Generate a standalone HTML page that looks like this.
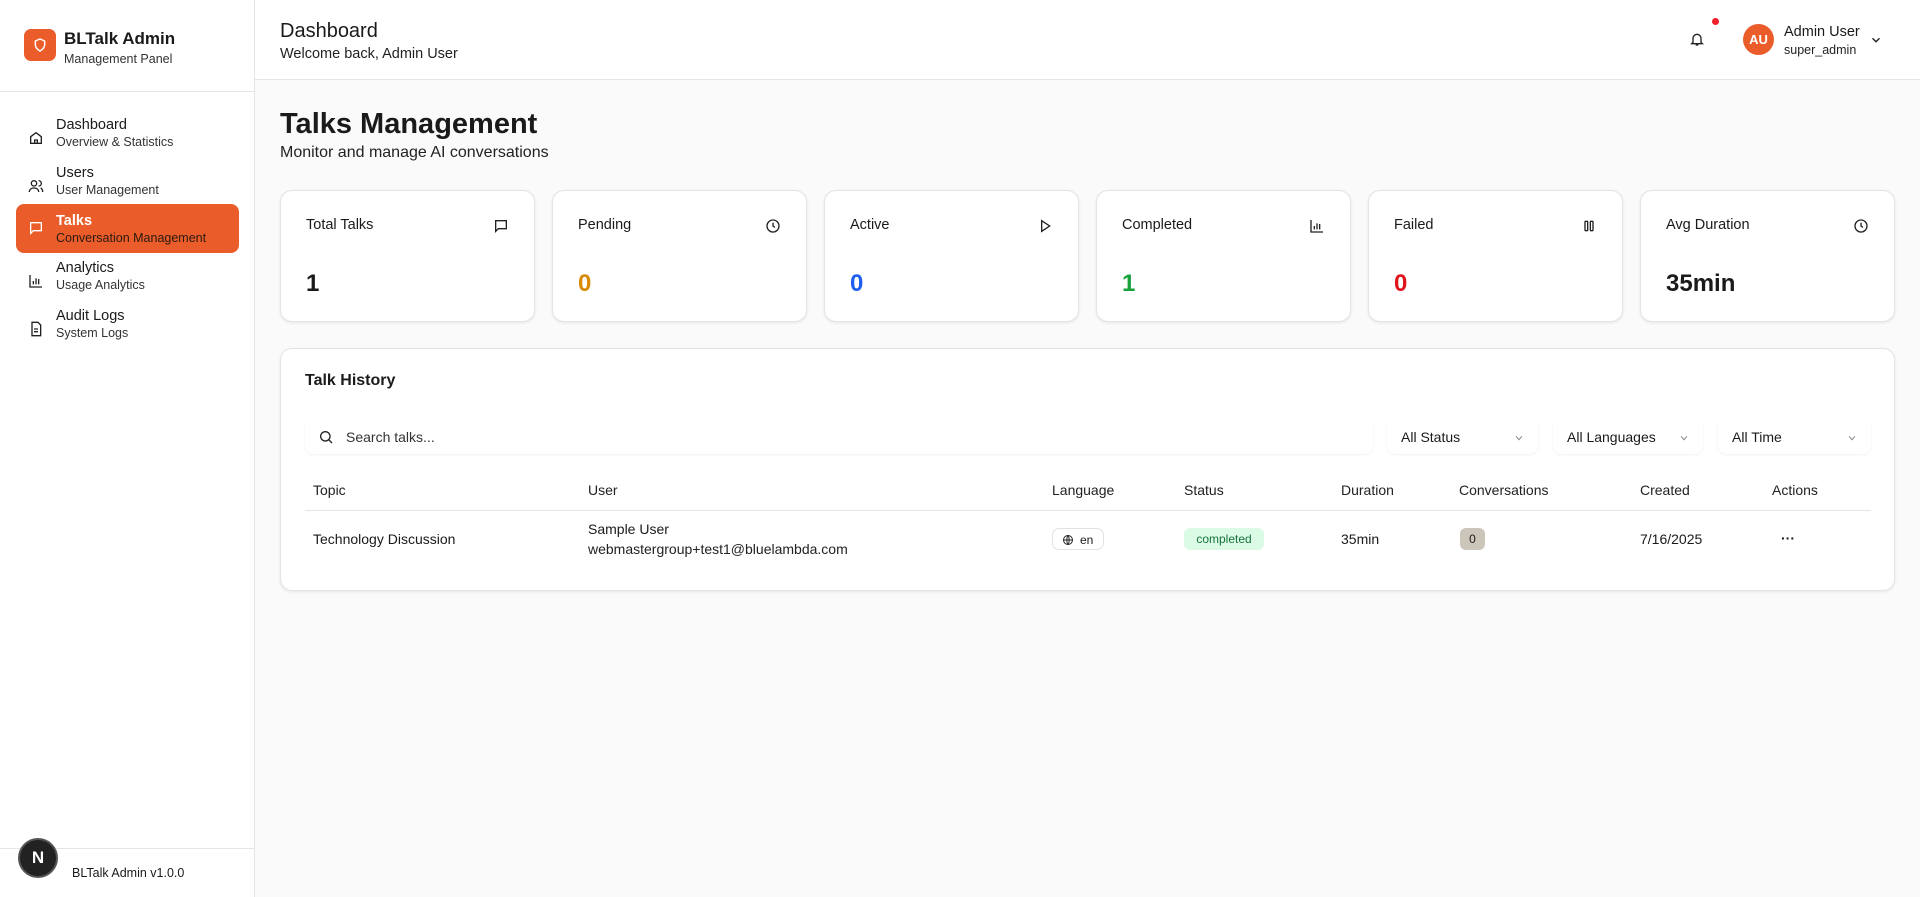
<!DOCTYPE html>
<html><head><meta charset="utf-8"><style>
*{box-sizing:border-box;margin:0;padding:0}
body{width:1920px;height:897px;font-family:"Liberation Sans",sans-serif;color:#1a1a1a;background:#fafafa;position:relative;overflow:hidden}
.side{position:absolute;left:0;top:0;width:255px;height:897px;background:#fff;border-right:1px solid #e5e5e5}
.abs{position:absolute}
.logo{left:24px;top:29px;width:32px;height:32px;border-radius:7px;background:#ea5d2b;display:flex;align-items:center;justify-content:center}
.nav{position:absolute;left:16px;width:223px;height:48px;border-radius:8px}
.nav svg{position:absolute;left:12px;top:16px}
.nav .t{position:absolute;left:40px;top:3px;font-size:14.5px;color:#1a1a1a}
.nav .s{position:absolute;left:40px;top:21px;font-size:12.5px;color:#333}
.nav.on{background:#ea5d2b}
.nav.on .t{color:#fff;font-weight:bold;top:9px}
.nav.on .s{color:#2a1a10;top:27px}
.card{position:absolute;background:#fff;border:1px solid #e4e4e4;border-radius:12px;box-shadow:0 1px 3px rgba(0,0,0,.08)}
.stat{top:190px;width:255px;height:132px}
.stat .l{position:absolute;left:25px;top:26px;font-size:14.5px}
.stat .v{position:absolute;left:25px;top:79px;font-size:24px;font-weight:bold}
.stat svg{position:absolute;right:25px;top:27px}
.sel{position:absolute;top:419px;height:35px;background:#fff;border-radius:8px;box-shadow:0 1px 2px rgba(0,0,0,.06);font-size:14px;padding:10px 0 0 14px}
.sel svg{position:absolute;right:14px;top:14px}
.th{position:absolute;top:482px;font-size:14px;color:#222}
.td{position:absolute;font-size:14px}
</style></head><body>
<div class="side">
 <div class="abs logo"><svg width="16" height="16" viewBox="0 0 24 24" fill="none" stroke="#fff" stroke-width="2.2" stroke-linejoin="round"><path d="M12 3l7 3v5c0 5-3.5 8-7 10-3.5-2-7-5-7-10V6z"/></svg></div>
 <div class="abs" style="left:64px;top:29px;font-size:17px;font-weight:bold">BLTalk Admin</div>
 <div class="abs" style="left:64px;top:52px;font-size:12.5px;color:#333">Management Panel</div>
 <div class="abs" style="left:0;top:91px;width:255px;border-top:1px solid #e5e5e5"></div>
 <div class="nav" style="top:114px"><svg width="16" height="16" viewBox="0 0 24 24" fill="none" stroke="#222" stroke-width="2"><path d="M4 10l8-6 8 6v10H4z"/><path d="M10 20v-5h4v5"/></svg><div class="t">Dashboard</div><div class="s">Overview &amp; Statistics</div></div>
 <div class="nav" style="top:162px"><svg width="16" height="16" viewBox="0 0 24 24" fill="none" stroke="#222" stroke-width="2"><circle cx="9" cy="8" r="4"/><path d="M2 21c0-4 3-6 7-6s7 2 7 6M16 4a4 4 0 010 8M19 15c2 1 3 3 3 6"/></svg><div class="t">Users</div><div class="s">User Management</div></div>
 <div class="nav on" style="top:204px;height:49px"><svg width="16" height="16" viewBox="0 0 24 24" fill="none" stroke="#fff" stroke-width="2"><path d="M4 4h16v12H8l-4 4z"/></svg><div class="t">Talks</div><div class="s">Conversation Management</div></div>
 <div class="nav" style="top:257px"><svg width="16" height="16" viewBox="0 0 24 24" fill="none" stroke="#222" stroke-width="2"><path d="M3 3v18h18M8 17v-5M12 17V8M16 17v-8"/></svg><div class="t">Analytics</div><div class="s">Usage Analytics</div></div>
 <div class="nav" style="top:305px"><svg width="16" height="16" viewBox="0 0 24 24" fill="none" stroke="#222" stroke-width="2"><path d="M6 2h9l4 4v16H6z"/><path d="M9 12h6M9 16h6"/></svg><div class="t">Audit Logs</div><div class="s">System Logs</div></div>
 <div class="abs" style="left:0;top:848px;width:255px;border-top:1px solid #e5e5e5"></div>
 <div class="abs" style="left:18px;top:838px;width:40px;height:40px;border-radius:50%;background:#222;border:2px solid #555;color:#fff;font-size:17px;font-weight:bold;text-align:center;line-height:36px">N</div>
 <div class="abs" style="left:72px;top:866px;font-size:12.5px">BLTalk Admin v1.0.0</div>
</div>
<div class="abs" style="left:255px;top:0;width:1665px;height:80px;background:#fff;border-bottom:1px solid #e5e5e5"></div>
<div class="abs" style="left:280px;top:20px;font-size:20px">Dashboard</div>
<div class="abs" style="left:280px;top:46px;font-size:14.5px;color:#222">Welcome back, Admin User</div>
<svg class="abs" style="left:1689px;top:31px" width="16" height="16" viewBox="0 0 24 24" fill="none" stroke="#222" stroke-width="2"><path d="M6 17V11a6 6 0 0112 0v6l2 2H4zM10 21h4"/></svg>
<div class="abs" style="left:1712px;top:18px;width:7px;height:7px;border-radius:50%;background:#f0202c"></div>
<div class="abs" style="left:1743px;top:24px;width:31px;height:31px;border-radius:50%;background:#ea5d2b;color:#fff;font-weight:bold;font-size:13px;text-align:center;line-height:31px">AU</div>
<div class="abs" style="left:1784px;top:24px;font-size:14.5px">Admin User</div>
<div class="abs" style="left:1784px;top:43px;font-size:12.5px;color:#222">super_admin</div>
<svg class="abs" style="left:1869px;top:33px" width="14" height="14" viewBox="0 0 24 24" fill="none" stroke="#222" stroke-width="2.4"><path d="M6 9l6 6 6-6"/></svg>

<div class="abs" style="left:280px;top:108px;font-size:29px;font-weight:bold">Talks Management</div>
<div class="abs" style="left:280px;top:144px;font-size:16px;color:#222">Monitor and manage AI conversations</div>

<div class="card stat" style="left:280px"><div class="l">Total Talks</div><svg width="16" height="16" viewBox="0 0 24 24" fill="none" stroke="#222" stroke-width="2"><path d="M4 4h16v12H8l-4 4z"/></svg><div class="v">1</div></div>
<div class="card stat" style="left:552px"><div class="l">Pending</div><svg width="16" height="16" viewBox="0 0 24 24" fill="none" stroke="#222" stroke-width="2"><circle cx="12" cy="12" r="9"/><path d="M12 7v5l3 2"/></svg><div class="v" style="color:#d98a06">0</div></div>
<div class="card stat" style="left:824px"><div class="l">Active</div><svg width="16" height="16" viewBox="0 0 24 24" fill="none" stroke="#222" stroke-width="2"><path d="M7 4l12 8-12 8z"/></svg><div class="v" style="color:#1f5ff0">0</div></div>
<div class="card stat" style="left:1096px"><div class="l">Completed</div><svg width="16" height="16" viewBox="0 0 24 24" fill="none" stroke="#222" stroke-width="2"><path d="M3 3v18h18M8 17v-5M12 17V8M16 17v-8"/></svg><div class="v" style="color:#18a13c">1</div></div>
<div class="card stat" style="left:1368px"><div class="l">Failed</div><svg width="16" height="16" viewBox="0 0 24 24" fill="none" stroke="#222" stroke-width="2"><rect x="6" y="5" width="4" height="14" rx="1"/><rect x="14" y="5" width="4" height="14" rx="1"/></svg><div class="v" style="color:#e0141c">0</div></div>
<div class="card stat" style="left:1640px"><div class="l">Avg Duration</div><svg width="16" height="16" viewBox="0 0 24 24" fill="none" stroke="#222" stroke-width="2"><circle cx="12" cy="12" r="9"/><path d="M12 7v5l3 2"/></svg><div class="v">35min</div></div>

<div class="card" style="left:280px;top:348px;width:1615px;height:243px"></div>
<div class="abs" style="left:305px;top:372px;font-size:16px;font-weight:bold">Talk History</div>
<div class="sel" style="left:305px;width:1068px;color:#333;padding-left:41px"><svg style="position:absolute;left:13px;top:10px" width="16" height="16" viewBox="0 0 24 24" fill="none" stroke="#222" stroke-width="2"><circle cx="11" cy="11" r="7"/><path d="M16 16l5 5"/></svg>Search talks...</div>
<div class="sel" style="left:1387px;width:151px">All Status<svg width="10" height="10" viewBox="0 0 24 24" fill="none" stroke="#888" stroke-width="2.5"><path d="M5 8l7 8 7-8"/></svg></div>
<div class="sel" style="left:1553px;width:150px">All Languages<svg width="10" height="10" viewBox="0 0 24 24" fill="none" stroke="#888" stroke-width="2.5"><path d="M5 8l7 8 7-8"/></svg></div>
<div class="sel" style="left:1718px;width:153px">All Time<svg width="10" height="10" viewBox="0 0 24 24" fill="none" stroke="#888" stroke-width="2.5"><path d="M5 8l7 8 7-8"/></svg></div>

<div class="th" style="left:313px">Topic</div>
<div class="th" style="left:588px">User</div>
<div class="th" style="left:1052px">Language</div>
<div class="th" style="left:1184px">Status</div>
<div class="th" style="left:1341px">Duration</div>
<div class="th" style="left:1459px">Conversations</div>
<div class="th" style="left:1640px">Created</div>
<div class="th" style="left:1772px">Actions</div>
<div class="abs" style="left:305px;top:510px;width:1566px;border-top:1px solid #e5e5e5"></div>
<div class="td" style="left:313px;top:531px">Technology Discussion</div>
<div class="td" style="left:588px;top:521px">Sample User</div>
<div class="td" style="left:588px;top:541px;color:#222">webmastergroup+test1@bluelambda.com</div>
<div class="td" style="left:1052px;top:528px;height:22px;width:52px;border:1px solid #e2e2e2;border-radius:7px;font-size:12px;padding:4px 0 0 27px">en<svg style="position:absolute;left:9px;top:5px" width="12" height="12" viewBox="0 0 24 24" fill="none" stroke="#222" stroke-width="2"><circle cx="12" cy="12" r="9"/><path d="M3 12h18M12 3c3 3 3 15 0 18M12 3c-3 3-3 15 0 18"/></svg></div>
<div class="td" style="left:1184px;top:528px;height:22px;width:80px;background:#dcfbe6;border-radius:6px;color:#16733a;font-size:12px;text-align:center;line-height:22px">completed</div>
<div class="td" style="left:1341px;top:531px">35min</div>
<div class="td" style="left:1460px;top:528px;width:25px;height:22px;background:#cbc5ba;border-radius:6px;font-size:12px;text-align:center;line-height:22px">0</div>
<div class="td" style="left:1640px;top:531px">7/16/2025</div>
<div class="td" style="left:1781px;top:530px;font-weight:bold">···</div>
</body></html>
